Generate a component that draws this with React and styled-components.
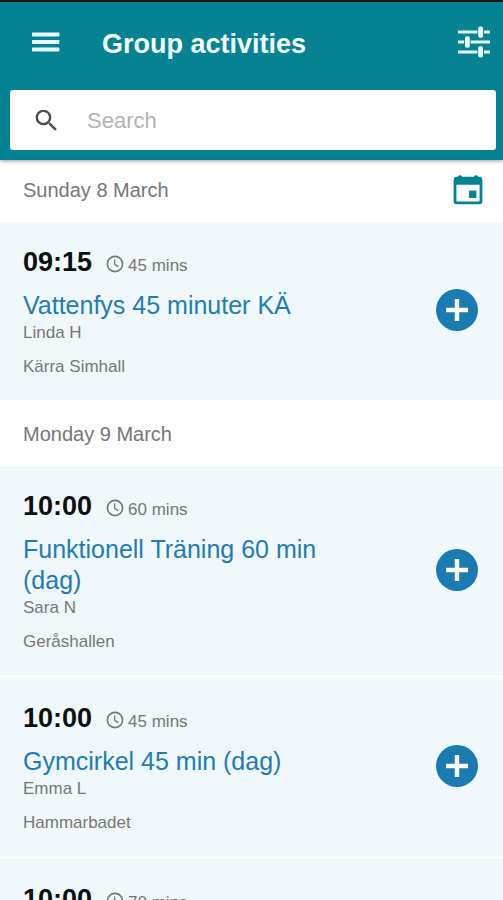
import React, { useState } from "react";
import styled, { createGlobalStyle } from "styled-components";
import { MdSearch } from "react-icons/md";

const days = [
  {
    label: "Sunday 8 March",
    activities: [
      { id: 1, time: "09:15", length: "45 mins", title: "Vattenfys 45 minuter KÄ", leader: "Linda H", place: "Kärra Simhall" },
    ],
  },
  {
    label: "Monday 9 March",
    activities: [
      { id: 2, time: "10:00", length: "60 mins", title: "Funktionell Träning 60 min (dag)", leader: "Sara N", place: "Geråshallen" },
      { id: 3, time: "10:00", length: "45 mins", title: "Gymcirkel 45 min (dag)", leader: "Emma L", place: "Hammarbadet" },
      { id: 4, time: "10:00", length: "70 mins" },
    ],
  },
];

const MenuIcon = () => (
  <svg width="28" height="20" viewBox="0 0 28 20" fill="currentColor">
    <rect x="0" y="0.4" width="27.4" height="4" rx="0.6" />
    <rect x="0" y="7.9" width="27.4" height="4" rx="0.6" />
    <rect x="0" y="15.4" width="27.4" height="4" rx="0.6" />
  </svg>
);

const FilterIcon = () => (
  <svg width="32" height="32" viewBox="0 0 32 32" fill="currentColor">
    <path d="M0 4.6h19.4v3H0zM26 4.6h6v3h-6zM0 14.5h6.2v3H0zM12.6 14.5H32v3H12.6zM0 24.4h19.4v3H0zM26 24.4h6v3h-6z" />
    <rect x="20.2" y="0.4" width="4.8" height="11.4" rx="1.8" />
    <rect x="7" y="10.3" width="4.8" height="11.4" rx="1.8" />
    <rect x="20.2" y="20.2" width="4.8" height="11.4" rx="1.8" />
  </svg>
);

const CalendarIcon = () => (
  <svg width="30" height="30" viewBox="0 0 30 30" fill="currentColor">
    <rect x="5" y="0.2" width="4" height="4" rx="1.6" />
    <rect x="21" y="0.2" width="4" height="4" rx="1.6" />
    <path
      fillRule="evenodd"
      d="M3.6 1.8h22.8a3 3 0 0 1 3 3v21.4a3 3 0 0 1-3 3H3.6a3 3 0 0 1-3-3V4.8a3 3 0 0 1 3-3zM3.4 9.8v15.6a1 1 0 0 0 1 1h21.2a1 1 0 0 0 1-1V9.8z"
    />
    <rect x="16" y="15.6" width="7.4" height="7.4" />
  </svg>
);

const ClockIcon = () => (
  <svg width="18" height="18" viewBox="0 0 18 18" fill="none" stroke="currentColor">
    <circle cx="9" cy="9" r="7.6" strokeWidth="1.6" />
    <path d="M8.7 4.4v5l3.6 2.2" strokeWidth="1.3" />
  </svg>
);

const PlusIcon = () => (
  <svg width="22" height="22" viewBox="0 0 22 22" fill="currentColor">
    <path d="M8.8 0h4.4v8.8H22v4.4h-8.8V22H8.8v-8.8H0V8.8h8.8z" />
  </svg>
);

const Activity = ({ item }) => (
  <Card>
    <Info>
      <TimeRow>
        <Time>{item.time}</Time>
        <Duration>
          <ClockIcon />
          <DurationText>{item.length}</DurationText>
        </Duration>
      </TimeRow>
      {item.title && (
        <>
          <Title>{item.title}</Title>
          <Detail>{item.leader}</Detail>
          <Place>{item.place}</Place>
        </>
      )}
    </Info>
    {item.title && (
      <AddButton type="button" aria-label={`Book ${item.title}`}>
        <PlusIcon />
      </AddButton>
    )}
  </Card>
);

const App = () => {
  const [search, setSearch] = useState("");

  return (
    <Page>
      <GlobalStyle />
      <Header>
        <TopBar>
          <IconButton type="button" aria-label="Menu">
            <MenuIcon />
          </IconButton>
          <Heading>Group activities</Heading>
          <IconButton type="button" aria-label="Filter">
            <FilterIcon />
          </IconButton>
        </TopBar>
        <SearchBox>
          <MdSearch size={29} />
          <SearchInput
            type="text"
            placeholder="Search"
            value={search}
            onChange={(e) => setSearch(e.target.value)}
          />
        </SearchBox>
      </Header>
      <List>
        {days.map((day, index) => (
          <section key={day.label}>
            <DayRow $first={index === 0}>
              <DayLabel>{day.label}</DayLabel>
              {index === 0 && (
                <IconButton type="button" aria-label="Choose date" $teal>
                  <CalendarIcon />
                </IconButton>
              )}
            </DayRow>
            <Cards>
              {day.activities.map((item) => (
                <Activity key={item.id} item={item} />
              ))}
            </Cards>
          </section>
        ))}
      </List>
    </Page>
  );
};

const GlobalStyle = createGlobalStyle`
  * {
    box-sizing: border-box;
  }

  body {
    margin: 0;
    background: #fff;
    font-family: "Liberation Sans", Arial, Helvetica, sans-serif;
  }

  h1, h2, h3, p {
    margin: 0;
    font-weight: 400;
  }

  svg {
    display: block;
    flex-shrink: 0;
  }
`;

const Page = styled.div`
  display: flex;
  flex-direction: column;
  height: 100vh;
  overflow: hidden;
`;

const Header = styled.header`
  flex-shrink: 0;
  z-index: 1;
  padding: 0 7px 10px 10px;
  border-top: 2px solid #231815;
  background: #058392;
  box-shadow: 0 1px 4px rgba(0, 0, 0, 0.4);
`;

const TopBar = styled.div`
  display: flex;
  align-items: center;
  height: 80px;
  margin-bottom: 8px;
  padding: 0 6px 0 22px;
`;

const IconButton = styled.button`
  display: flex;
  padding: 0;
  border: 0;
  background: none;
  color: ${({ $teal }) => ($teal ? "#058392" : "#e9fbfd")};
  cursor: pointer;
`;

const Heading = styled.h1`
  flex: 1;
  margin-left: 42px;
  padding-top: 4px;
  color: #f4feff;
  font-size: 27px;
  font-weight: 700;
  line-height: 32px;
`;

const SearchBox = styled.label`
  display: flex;
  align-items: center;
  height: 60px;
  padding: 0 22px;
  border-radius: 3px;
  background: #fff;
  color: #4d4d4d;
`;

const SearchInput = styled.input`
  flex: 1;
  min-width: 0;
  margin-left: 26px;
  padding: 2px 0 0;
  border: 0;
  outline: 0;
  background: none;
  color: #444;
  font-family: inherit;
  font-size: 22px;

  &::placeholder {
    color: #b4b4b4;
    opacity: 1;
  }
`;

const List = styled.main`
  flex: 1;
  min-height: 0;
  overflow-y: auto;
  scrollbar-width: none;
`;

const DayRow = styled.div`
  display: flex;
  align-items: center;
  justify-content: space-between;
  height: ${({ $first }) => ($first ? 62 : 66)}px;
  padding: ${({ $first }) => ($first ? "0 20px 2px 23px" : "2px 20px 0 23px")};
`;

const DayLabel = styled.h2`
  color: #777;
  font-size: 20px;
  line-height: 24px;
`;

const Cards = styled.div`
  display: flex;
  flex-direction: column;
  gap: 3px;
`;

const Card = styled.article`
  display: flex;
  align-items: center;
  gap: 72px;
  padding: 19px 25px 21px 23px;
  background: #f0f8fb;
`;

const Info = styled.div`
  flex: 1;
  min-width: 0;
`;

const TimeRow = styled.div`
  display: flex;
  align-items: center;
  gap: 14px;
  margin-bottom: 7px;
`;

const Time = styled.span`
  color: #0d0f10;
  font-size: 27px;
  font-weight: 700;
  line-height: 42px;
`;

const Duration = styled.span`
  display: flex;
  align-items: center;
  gap: 4px;
  padding-top: 4px;
  color: #777;
`;

const DurationText = styled.span`
  padding-top: 4px;
  font-size: 17px;
  line-height: 24px;
`;

const Title = styled.h3`
  color: #1f7db3;
  font-size: 25px;
  line-height: 31px;
`;

const Detail = styled.p`
  color: #777;
  font-size: 17px;
  line-height: 24px;
`;

const Place = styled(Detail)`
  margin-top: 10px;
`;

const AddButton = styled.button`
  display: flex;
  align-items: center;
  justify-content: center;
  flex-shrink: 0;
  width: 42px;
  height: 42px;
  padding: 0;
  border: 0;
  border-radius: 50%;
  background: #1a7bb0;
  color: #fff;
  cursor: pointer;
`;

export default App;
